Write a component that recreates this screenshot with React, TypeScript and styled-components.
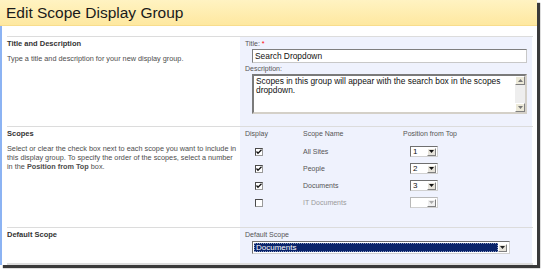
import { Fragment } from "react";
import styled, { createGlobalStyle } from "styled-components";

const GlobalStyle = createGlobalStyle`
  html, body {
    margin: 0;
    padding: 0;
    background: #ffffff;
  }
  body {
    width: 541px;
    height: 272px;
    overflow: hidden;
    font-family: "Liberation Sans", Arial, sans-serif;
  }
`;

const Frame = styled.div`
  width: 537px;
  height: 265px;
  background: #ffffff;
  box-shadow: 3px 3px 1px #3a3a3a;
  display: flex;
  flex-direction: column;
`;

const Header = styled.div`
  height: 26px;
  background: linear-gradient(#fff3c2, #fee8a0);
  border-bottom: 1px solid #f8dd8d;
  display: flex;
  align-items: center;
  padding-left: 6px;
  font-size: 15.5px;
  color: #1a1a1a;
`;

const Body = styled.div`
  flex: 1;
  border-left: 2px solid #8cb3f3;
  padding: 10px 4px 0 5px;
  display: flex;
  flex-direction: column;
`;

const Section = styled.div<{ $h: number }>`
  height: ${(p) => p.$h}px;
  border-top: 1px solid #dcdcdc;
  display: grid;
  grid-template-columns: 233px 292px;
`;

const Left = styled.div`
  padding: 2px 6px 0 0;
  font-size: 7.3px;
  line-height: 9px;
  color: #4d4d4d;
`;

const SectionTitle = styled.div`
  font-weight: bold;
  color: #333333;
  font-size: 7.5px;
  margin-bottom: 6px;
`;

const Description = styled.div`
  white-space: nowrap;
`;

const Right = styled.div`
  background: #eff2fd;
  padding: 2px 0 0 5px;
  font-size: 7px;
  line-height: 9px;
  color: #555555;
`;

const Label = styled.div`
  color: #555555;
`;

const Star = styled.span`
  color: #ff0000;
`;

const Indent = styled.div`
  padding-left: 7px;
`;

const TextInput = styled.div`
  width: 269px;
  height: 10px;
  border: 1px solid #7f7f7f;
  border-right-color: #c8c8c8;
  border-bottom-color: #c8c8c8;
  background: #ffffff;
  font-size: 8.4px;
  line-height: 10px;
  color: #111111;
  padding: 1px 2px;
  margin: 1px 0 1px;
`;

const TextArea = styled.div`
  width: 271px;
  height: 36px;
  border: 2px solid #7a7a7a;
  border-right-color: #d4d0c8;
  border-bottom-color: #d4d0c8;
  background: #ffffff;
  display: flex;
  margin-top: 1px;
`;

const AreaText = styled.div`
  flex: 1;
  font-size: 8.4px;
  line-height: 9px;
  color: #111111;
  padding: 1px 2px;
`;

const ScrollBar = styled.div`
  width: 10px;
  background: #eeeeee;
  display: flex;
  flex-direction: column;
  justify-content: space-between;
`;

const ScrollButton = styled.div`
  height: 9px;
  background: #ece9d8;
  border: 1px solid #ffffff;
  border-right-color: #808080;
  border-bottom-color: #808080;
  box-sizing: border-box;
  display: flex;
  align-items: center;
  justify-content: center;
`;

const Arrow = ({ up, color = "#222" }: { up?: boolean; color?: string }) => (
  <svg width="5" height="3" viewBox="0 0 5 3">
    <path d={up ? "M0 3 L2.5 0 L5 3 Z" : "M0 0 L5 0 L2.5 3 Z"} fill={color} />
  </svg>
);

const ScopeGrid = styled.div`
  display: grid;
  grid-template-columns: 58px 100px 1fr;
  grid-template-rows: 14px;
  grid-auto-rows: 17px;
  align-items: center;
`;

const HeadCell = styled.div`
  color: #555555;
  align-self: start;
`;

const CheckCell = styled.div`
  padding-left: 10px;
  display: flex;
`;

const Check = styled.div`
  width: 6px;
  height: 6px;
  border: 1px solid #4a4a4a;
  border-right-color: #9a9a9a;
  border-bottom-color: #9a9a9a;
  background: #ffffff;
  display: flex;
  align-items: center;
  justify-content: center;
`;

const ScopeName = styled.div<{ $disabled?: boolean }>`
  color: ${(p) => (p.$disabled ? "#9a9a9a" : "#555555")};
`;

const SmallSelect = styled.div<{ $disabled?: boolean }>`
  margin-left: 7px;
  width: 26px;
  height: 9px;
  border: 1px solid ${(p) => (p.$disabled ? "#b8b8b8" : "#6f6f6f")};
  border-right-color: #d0d0d0;
  border-bottom-color: #d0d0d0;
  background: #ffffff;
  display: flex;
  align-items: center;
  font-size: 8px;
  color: #111111;
`;

const SelectValue = styled.div`
  flex: 1;
  padding-left: 2px;
  line-height: 9px;
`;

const DropButton = styled.div<{ $disabled?: boolean }>`
  width: 9px;
  height: 8px;
  margin-right: 1px;
  background: ${(p) => (p.$disabled ? "#f0f0f0" : "#e6e3da")};
  border: 1px solid #ffffff;
  border-right-color: #808080;
  border-bottom-color: #808080;
  box-sizing: border-box;
  display: flex;
  align-items: center;
  justify-content: center;
`;

const WideSelect = styled.div`
  width: 254px;
  height: 9px;
  border: 1px solid #6f6f6f;
  border-right-color: #d0d0d0;
  border-bottom-color: #d0d0d0;
  background: #ffffff;
  display: flex;
  align-items: center;
  padding: 1px;
  margin-top: 2px;
`;

const Highlight = styled.div`
  flex: 1;
  height: 9px;
  background: #0a246a;
  color: #ffffff;
  font-size: 8px;
  line-height: 9px;
  padding-left: 2px;
  outline: 1px dotted #8c9ac0;
  outline-offset: -1px;
`;

const BottomLine = styled.div`
  height: 2px;
  background: #dddddd;
`;

const scopes = [
  { name: "All Sites", pos: "1", checked: true },
  { name: "People", pos: "2", checked: true },
  { name: "Documents", pos: "3", checked: true },
  { name: "IT Documents", pos: "", checked: false },
];

const Tick = () => (
  <svg width="6" height="6" viewBox="0 0 6 6">
    <path d="M0.5 2.5 L2 4.2 L5.5 0.8" stroke="#111" strokeWidth="1.3" fill="none" />
  </svg>
);

export default function App() {
  return (
    <>
      <GlobalStyle />
      <Frame>
        <Header>Edit Scope Display Group</Header>
        <Body>
          <Section $h={89}>
            <Left>
              <SectionTitle>Title and Description</SectionTitle>
              Type a title and description for your new display group.
            </Left>
            <Right>
              <Label>
                Title: <Star>*</Star>
              </Label>
              <Indent>
                <TextInput>Search Dropdown</TextInput>
              </Indent>
              <Label>Description:</Label>
              <Indent>
                <TextArea>
                  <AreaText>
                    Scopes in this group will appear with the search box in the scopes dropdown.
                  </AreaText>
                  <ScrollBar>
                    <ScrollButton>
                      <Arrow up color="#777" />
                    </ScrollButton>
                    <ScrollButton>
                      <Arrow color="#777" />
                    </ScrollButton>
                  </ScrollBar>
                </TextArea>
              </Indent>
            </Right>
          </Section>
          <Section $h={100}>
            <Left>
              <SectionTitle>Scopes</SectionTitle>
              <Description>
                Select or clear the check box next to each scope you want to include in
                <br />
                this display group. To specify the order of the scopes, select a number
                <br />
                in the <b>Position from Top</b> box.
              </Description>
            </Left>
            <Right>
              <ScopeGrid>
                <HeadCell>Display</HeadCell>
                <HeadCell>Scope Name</HeadCell>
                <HeadCell>Position from Top</HeadCell>
                {scopes.map((s) => (
                  <Fragment key={s.name}>
                    <CheckCell>
                      <Check>{s.checked && <Tick />}</Check>
                    </CheckCell>
                    <ScopeName $disabled={!s.checked}>{s.name}</ScopeName>
                    <div>
                      <SmallSelect $disabled={!s.checked}>
                        <SelectValue>{s.pos}</SelectValue>
                        <DropButton $disabled={!s.checked}>
                          <Arrow color={s.checked ? "#111" : "#aaa"} />
                        </DropButton>
                      </SmallSelect>
                    </div>
                  </Fragment>
                ))}
              </ScopeGrid>
            </Right>
          </Section>
          <Section $h={35}>
            <Left>
              <SectionTitle>Default Scope</SectionTitle>
            </Left>
            <Right>
              <Label>Default Scope</Label>
              <Indent>
                <WideSelect>
                  <Highlight>Documents</Highlight>
                  <DropButton>
                    <Arrow />
                  </DropButton>
                </WideSelect>
              </Indent>
            </Right>
          </Section>
          <BottomLine />
        </Body>
      </Frame>
    </>
  );
}
